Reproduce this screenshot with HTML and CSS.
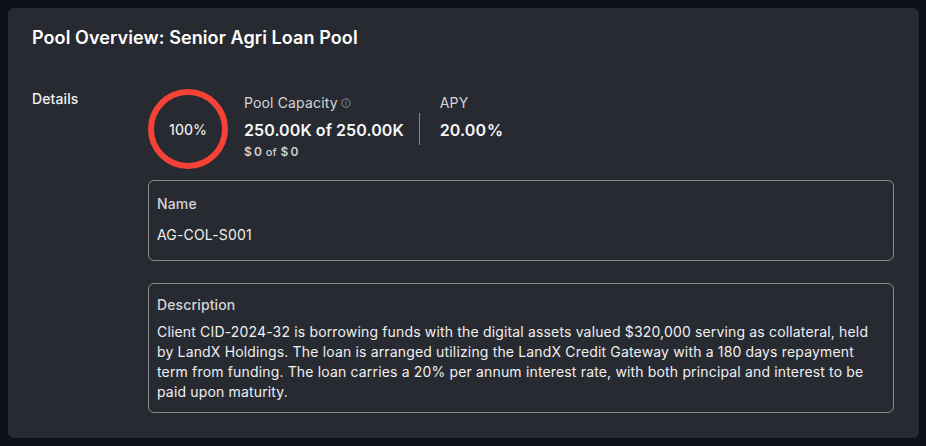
FILE: index.html
```html
<!DOCTYPE html>
<html lang="en">
<head>
<meta charset="utf-8">
<title>Pool Overview</title>
<link rel="stylesheet" href="styles.css">
</head>
<body>
<main class="card">
  <h1 class="title">Pool Overview: Senior Agri Loan Pool</h1>
  <section class="details">
    <h2 class="details-label">Details</h2>
    <div class="details-body">
      <div class="stats">
        <div class="ring">100%</div>
        <div class="stat capacity">
          <div class="stat-label">Pool Capacity<svg class="info" viewBox="0 0 10 10" width="10" height="10" aria-hidden="true"><circle cx="5" cy="5" r="4.2" fill="none" stroke="#8b8d92" stroke-width="1"/><path d="M5 4.5V7" stroke="#8b8d92" stroke-width="1"/><circle cx="5" cy="3.2" r="0.6" fill="#8b8d92"/></svg></div>
          <div class="stat-value">250.00K of 250.00K</div>
          <div class="stat-sub">$<span class="gap"></span>0 <span class="of">of</span> $<span class="gap"></span>0</div>
        </div>
        <div class="divider"></div>
        <div class="stat">
          <div class="stat-label">APY</div>
          <div class="stat-value">20.00<span class="gap"></span>%</div>
        </div>
      </div>
      <div class="box name-box">
        <h3 class="box-title">Name</h3>
        <p class="box-text name-text">AG-COL-S001</p>
      </div>
      <div class="box desc-box">
        <h3 class="box-title desc-title">Description</h3>
        <p class="box-text desc-text">Client CID-2024-32 is borrowing funds with the digital assets valued $320,000 serving as collateral, held by LandX Holdings. The loan is arranged utilizing the LandX Credit Gateway with a 180 days repayment term from funding. The loan carries a 20% per annum interest rate, with both principal and interest to be paid upon maturity.</p>
      </div>
    </div>
  </section>
</main>
</body>
</html>
```

FILE: styles.css
```css
* { box-sizing: border-box; }
html, body { height: 100%; }
body {
  margin: 0;
  padding: 8px 7px 8px 8px;
  background: #0c1017;
  font-family: Inter, "Noto Sans", sans-serif;
  color: #e6e7e9;
  overflow: hidden;
}
.card {
  height: 430px;
  background: #282a31;
  border-radius: 6px;
  padding: 18px 25px 0 24px;
}
.title {
  margin: 0;
  font-size: 18px;
  line-height: 24px;
  font-weight: 600;
  letter-spacing: 0.09px;
  color: #fff;
}
.details {
  display: flex;
  margin-top: 38px;
}
.details-label {
  width: 116px;
  flex: none;
  margin: 0;
  padding-top: 1px;
  font-size: 14px;
  line-height: 20px;
  font-weight: 500;
  letter-spacing: 0.1px;
  color: #f0f1f2;
}
.details-body { flex: 1; min-width: 0; padding-top: 1px; }
.stats { display: flex; align-items: flex-start; }
.ring {
  width: 80px;
  height: 80px;
  flex: none;
  border: 6px solid #f44336;
  border-radius: 50%;
  display: flex;
  align-items: center;
  justify-content: center;
  font-size: 14px;
  font-weight: 500;
  color: #e6e7e9;
}
.stat { padding-top: 4px; }
.capacity { margin-left: 16px; }
.stat-label {
  font-size: 14px;
  line-height: 20px;
  letter-spacing: 0.15px;
  color: #d4d5d8;
}
.info { margin-left: 3px; vertical-align: 0; }
.stat-value {
  margin-top: 7px;
  font-size: 16px;
  line-height: 20px;
  font-weight: 600;
  letter-spacing: 0.08px;
  color: #f7f7f8;
}
.stat-sub {
  margin-top: 4px;
  font-size: 12px;
  line-height: 16px;
  font-weight: 600;
  letter-spacing: 0.3px;
  color: #cfd0d3;
}
.of { font-size: 11px; font-weight: 500; }
.gap { display: inline-block; width: 2px; }
.stat-value .gap { width: 1px; }
.divider {
  width: 1px;
  height: 32px;
  margin: 24px 20px 0 15px;
  background: #85878b;
}
.box {
  border: 1px solid #8a8c90;
  border-radius: 6px;
  padding: 8px;
}
.name-box { height: 81px; margin-top: 11px; }
.desc-box { height: 130px; margin-top: 22px; }
.box-title {
  margin: 5px 0 0;
  font-size: 14px;
  line-height: 20px;
  font-weight: 500;
  letter-spacing: 0.14px;
  color: #d4d5d8;
}
.desc-title { margin-top: 3px; }
.box-text {
  margin: 0;
  font-size: 14px;
  line-height: 20px;
  letter-spacing: 0.16px;
  color: #eeeff0;
}
.name-text { margin-top: 11px; }
.desc-text { margin-top: 7px; }
```
